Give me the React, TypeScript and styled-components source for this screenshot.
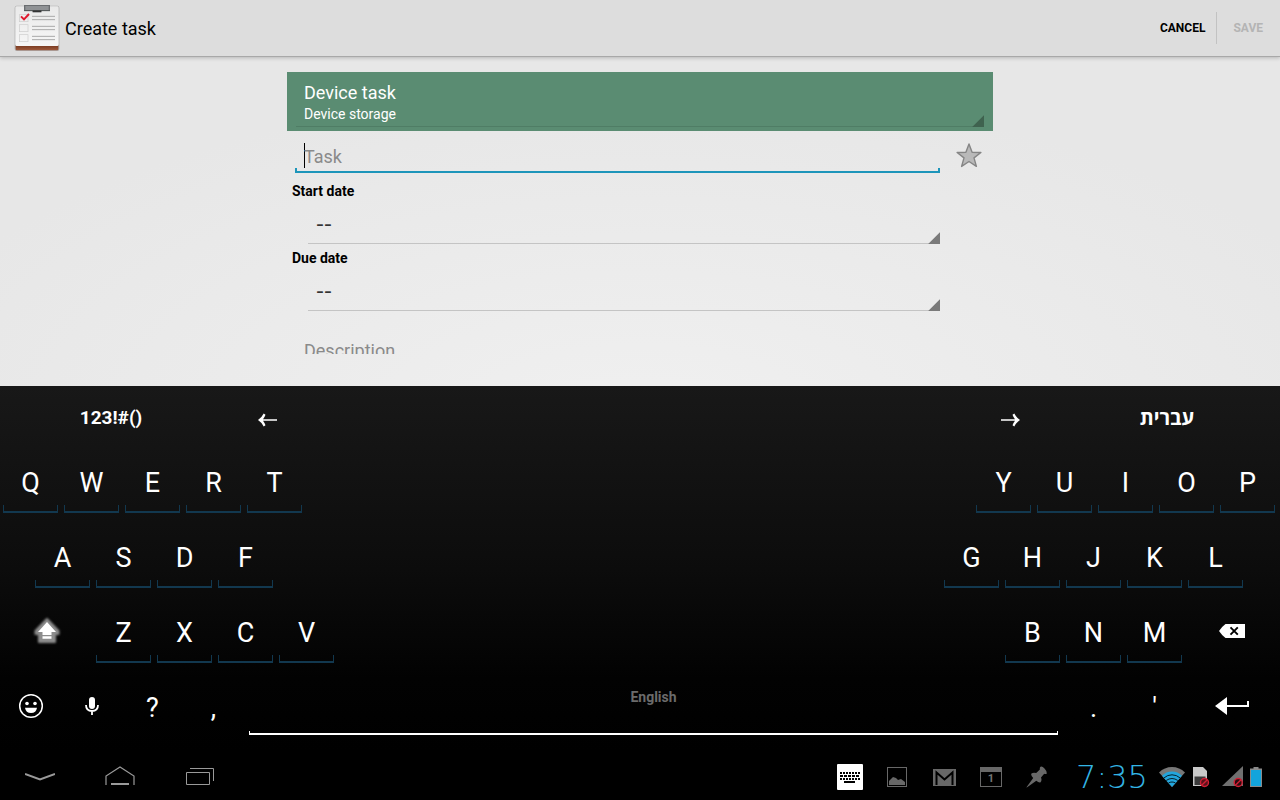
import React from "react";
import styled, { createGlobalStyle } from "styled-components";

const GlobalStyle = createGlobalStyle`
  * { box-sizing: border-box; }
  body { margin: 0; background: #000; font-family: Roboto, "Liberation Sans", sans-serif; }
  button, input, select, textarea {
    font: inherit; color: inherit; margin: 0; padding: 0; border: 0;
    background: transparent; border-radius: 0; outline: none; appearance: none;
  }
  svg { display: block; }
`;

const Screen = styled.div`
  display: flex;
  flex-direction: column;
  height: 100vh;
  overflow: hidden;
`;

/* ---------- action bar ---------- */

const ActionBar = styled.header`
  display: flex;
  align-items: center;
  flex: none;
  height: 57px;
  padding-left: 14px;
  background: #dddddd;
  border-bottom: 1px solid #a8a8a8;
  box-shadow: 0 1px 4px rgba(0, 0, 0, 0.22);
  position: relative;
`;

const Title = styled.h1`
  flex: 1;
  margin: 0 0 0 5px;
  padding-top: 2px;
  font-size: 18px;
  line-height: 24px;
  font-weight: 400;
  color: #000;
`;

const Action = styled.button`
  height: 32px;
  padding: 0 11px;
  font-size: 12px;
  font-weight: 700;
  color: #000;
  &:disabled {
    padding: 0 17px 0 16px;
    color: #b4b4b4;
    border-left: 1px solid #c2c2c2;
  }
`;

/* ---------- form ---------- */

const Content = styled.main`
  flex: 1;
  min-height: 0;
  padding: 15px 16px 32px;
  background: radial-gradient(ellipse 60% 100% at 50% 110%, #f0f0f0, #e7e7e7);
`;

const Form = styled.form`
  width: 100%;
  max-width: 706px;
  height: 100%;
  margin: 0 auto;
  overflow: hidden;
`;

const AccountButton = styled.button`
  display: block;
  width: 100%;
  padding: 0 9px 4px;
  text-align: left;
  color: #fff;
  background: #5a8c72;
`;

const AccountFace = styled.span`
  display: flex;
  flex-direction: column;
  height: 55px;
  padding: 10px 8px 0;
  background:
    linear-gradient(135deg, transparent 48%, #3f624f 54%) right bottom / 12px 12px no-repeat,
    linear-gradient(#4f7d65, #4f7d65) left bottom / 100% 1px no-repeat;
`;

const AccountName = styled.span`
  font-size: 18px;
  line-height: 22px;
`;

const AccountType = styled.span`
  font-size: 14px;
  line-height: 20px;
`;

const TaskRow = styled.div`
  display: flex;
`;

const TaskInput = styled.input`
  flex: 1;
  min-width: 0;
  height: 42px;
  margin-left: 8px;
  padding: 8px 8px 0 9px;
  font-size: 18px;
  background:
    linear-gradient(#000, #000) 9px 12px / 1px 25px no-repeat,
    linear-gradient(#1d95ba, #1d95ba) left bottom / 100% 2px no-repeat,
    linear-gradient(#1d95ba, #1d95ba) left bottom / 2px 5px no-repeat,
    linear-gradient(#1d95ba, #1d95ba) right bottom / 2px 5px no-repeat;
  &::placeholder { color: #8a8a8a; opacity: 1; }
`;

const StarButton = styled.button`
  display: flex;
  justify-content: center;
  width: 53px;
  padding: 12px 0 0 5px;
`;

const DateFields = styled.div`
  display: flex;
  flex-direction: column;
`;

const DateField = styled.div`
  display: flex;
  flex-direction: column;
  margin: 0 53px 6px 5px;
  &:first-of-type { margin-top: 10px; }
`;

const DateLabel = styled.label`
  font-size: 14px;
  line-height: 16px;
  font-weight: 700;
  color: #000;
`;

const DateSelect = styled.select`
  height: 45px;
  margin-left: 16px;
  padding: 3px 8px 0;
  font-family: "DejaVu Sans", sans-serif;
  font-size: 22px;
  color: #333;
  background:
    linear-gradient(135deg, transparent 48%, #7a7a7a 54%) right bottom / 12px 12px no-repeat,
    linear-gradient(#c4c4c4, #c4c4c4) left bottom / 100% 1px no-repeat;
`;

const Description = styled.textarea`
  display: block;
  width: 100%;
  height: 60px;
  padding: 22px 17px 0;
  font-size: 18px;
  line-height: 24px;
  resize: none;
  &::placeholder { color: #8a8a8a; opacity: 1; }
`;

/* ---------- keyboard ---------- */

const Keyboard = styled.section`
  flex: none;
  padding-bottom: 6px;
  color: #fff;
  background: linear-gradient(#181818, #0c0c0c 50%, #020202 80%, #000);
`;

const KeyRow = styled.div<{ $inset?: number }>`
  display: flex;
  justify-content: space-between;
  height: 75px;
  padding-left: ${(p) => p.$inset ?? 0}px;
  padding-right: ${(p) => (p.$inset ?? 0) + 2}px;
`;

const ModeRow = styled(KeyRow)`
  height: 60px;
`;

const KeyGroup = styled.div`
  display: flex;
`;

const LetterKey = styled.button`
  width: 61px;
  padding: 0 3px 8px;
  font-size: 27px;
`;

const LetterFace = styled.span`
  display: block;
  height: 67px;
  padding-top: 7px;
  line-height: 60px;
  background:
    linear-gradient(#12384f, #12384f) left bottom / 100% 2px no-repeat,
    linear-gradient(#12384f, #12384f) left bottom / 1px 8px no-repeat,
    linear-gradient(#12384f, #12384f) right bottom / 1px 8px no-repeat;
`;

const SymbolKey = styled.button`
  width: 61px;
  padding-bottom: 2px;
  font-size: 27px;
`;

const IconKey = styled.button<{ $wide?: boolean }>`
  display: flex;
  align-items: center;
  justify-content: center;
  width: ${(p) => (p.$wide ? 93 : 61)}px;
  padding-bottom: 5px;
`;

const ArrowKey = styled(IconKey)`
  width: 91px;
  padding: 8px 0 0;
`;

const ModeKey = styled.button`
  width: 222px;
  padding-top: 2px;
  font-family: Roboto, "Open Sans", "DejaVu Sans", sans-serif;
  font-size: 19px;
  font-weight: 700;
  &:lang(he) { font-size: 20px; }
`;

const SpaceKey = styled.button`
  flex: 1;
  margin: 0 5px 11px;
  padding-bottom: 12px;
  font-size: 14px;
  font-weight: 700;
  color: #6b6b6b;
  background:
    linear-gradient(#fff, #fff) left bottom / 100% 2px no-repeat,
    linear-gradient(#fff, #fff) left bottom / 1px 4px no-repeat,
    linear-gradient(#fff, #fff) right bottom / 1px 4px no-repeat;
`;

/* ---------- system bar ---------- */

const SystemBar = styled.footer`
  display: flex;
  align-items: center;
  justify-content: space-between;
  flex: none;
  height: 48px;
  padding-right: 18px;
  background: #000;
`;

const NavGroup = styled.nav`
  display: flex;
`;

const NavButton = styled.button`
  display: flex;
  align-items: center;
  justify-content: center;
  width: 80px;
  height: 48px;
`;

const Tray = styled.div`
  display: flex;
  align-items: center;
  gap: 24px;
  padding-top: 2px;
`;

const StatusGroup = styled.div`
  display: flex;
  align-items: center;
  gap: 7px;
`;

const Clock = styled.time`
  width: 80px;
  font-family: "DejaVu Sans Light", "DejaVu Sans ExtraLight", "DejaVu Sans", sans-serif;
  font-weight: 200;
  font-size: 32px;
  line-height: 40px;
  text-align: center;
  color: #33b5e5;
`;

/* ---------- drawings ---------- */

const AppIcon = () => (
  <svg width="46" height="48" viewBox="0 0 138 144" aria-hidden="true">
    <defs>
      <linearGradient id="paper" x1="0" y1="0" x2="0" y2="1">
        <stop offset="0" stopColor="#e9e9e9" />
        <stop offset="1" stopColor="#f6f6f6" />
      </linearGradient>
      <linearGradient id="wood" x1="0" y1="0" x2="0" y2="1">
        <stop offset="0" stopColor="#6b2f17" />
        <stop offset="1" stopColor="#a05a3c" />
      </linearGradient>
    </defs>
    <rect x="2" y="5" width="134" height="136" rx="6" fill="#8e8e8e" opacity="0.6" />
    <rect x="5" y="120" width="128" height="19" rx="3" fill="url(#wood)" />
    <rect x="4" y="7" width="130" height="119" rx="4" fill="url(#paper)" />
    <path d="M30 3h78v18H82v4H56v-4H30z" fill="#6a6d70" />
    <path d="M34 9h70M34 15h70" stroke="#b5b8ba" strokeWidth="3" />
    <path d="M30 20h78" stroke="#55585a" strokeWidth="3" />
    <path d="M56 22h26" stroke="#333" strokeWidth="5" />
    <g fill="none" stroke="#cdcdcd" strokeWidth="2">
      <rect x="16" y="32" width="26" height="21" />
      <rect x="16" y="62" width="26" height="21" />
      <rect x="16" y="92" width="26" height="21" />
    </g>
    <path
      d="M54 37h69M54 47h69M54 67h69M54 77h69M54 97h69M54 107h69"
      stroke="#a9a9a9"
      strokeWidth="3"
    />
    <path d="M21 37l9 9 15-16" fill="none" stroke="#e0182d" strokeWidth="6" />
  </svg>
);

const Star = () => (
  <svg width="26" height="25" viewBox="0 0 26 25" aria-hidden="true">
    <path
      d="M13 1l3.1 8.2 8.8.3-6.9 5.4 2.4 8.5-7.4-4.9-7.4 4.9L8 14.900 1.100 9.500l8.800-.3z"
      fill="#b9b9b9"
      stroke="#858585"
      strokeWidth="1.400"
      strokeLinejoin="round"
    />
  </svg>
);

const Arrow = ({ right }: { right?: boolean }) => (
  <svg width="19" height="14" viewBox="0 0 19 14" aria-hidden="true">
    <path
      d={
        right
          ? "M0 6.200h14Q12.300 4 11.500 1.700l1.800-1.200Q15.500 4.800 19 7q-3.500 2.200-5.700 6.500l-1.800-1.200q.8-2.300 2.500-4.500H0z"
          : "M19 6.200H5Q6.700 4 7.500 1.700L5.700.5Q3.500 4.800 0 7q3.500 2.200 5.700 6.500l1.800-1.200q-.8-2.300-2.500-4.500H19z"
      }
      fill="#fff"
    />
  </svg>
);

const Shift = () => (
  <svg width="34" height="34" viewBox="0 0 34 34" aria-hidden="true">
    <defs>
      <filter id="glow" x="-30%" y="-30%" width="160%" height="160%">
        <feGaussianBlur stdDeviation="1" />
      </filter>
    </defs>
    <path
      d="M17 5L5.500 17v3H9v8h16v-8h3.500v-3z"
      fill="#8c8c8c"
      stroke="#8c8c8c"
      strokeWidth="2"
      strokeLinejoin="round"
      filter="url(#glow)"
    />
    <path d="M17 8l9 10h-4.500v3h-9v-3H8z" fill="#fff" />
    <path d="M12.500 23.500h9" stroke="#fff" strokeWidth="2.500" />
  </svg>
);

const Backspace = () => (
  <svg width="26" height="14" viewBox="0 0 26 14" aria-hidden="true">
    <path d="M6.500 0H26v14H6.500Q3 11.500 0 7q3-4.500 6.500-7z" fill="#fff" />
    <path d="M11.500 3.300l7.300 7.400M18.800 3.300l-7.300 7.400" stroke="#000" strokeWidth="1.900" />
  </svg>
);

const Smiley = () => (
  <svg width="26" height="26" viewBox="0 0 26 26" aria-hidden="true">
    <circle cx="13" cy="13" r="11.300" fill="none" stroke="#fff" strokeWidth="1.500" />
    <circle cx="9" cy="10.500" r="1.800" fill="#fff" />
    <circle cx="17" cy="10.500" r="1.800" fill="#fff" />
    <path d="M7 14.800h12q-.8 5.200-6 5.200t-6-5.200z" fill="#fff" />
  </svg>
);

const Mic = () => (
  <svg width="16" height="20" viewBox="0 0 16 20" aria-hidden="true">
    <rect x="5" y="1" width="6" height="12" rx="3" fill="#fff" />
    <path d="M2 9q0 6 6 6t6-6M8 15v4" fill="none" stroke="#fff" strokeWidth="1.800" />
  </svg>
);

const Enter = () => (
  <svg width="34" height="18" viewBox="0 0 34 18" aria-hidden="true">
    <path d="M0 9L12 0v18z" fill="#fff" />
    <path d="M12 9h21V4" fill="none" stroke="#fff" strokeWidth="2" />
  </svg>
);

const HideIcon = () => (
  <svg width="30" height="10" viewBox="0 0 30 10" aria-hidden="true">
    <path d="M0 3l15 5.500L30 3" fill="none" stroke="#9a9a9a" strokeWidth="2" />
  </svg>
);

const HomeIcon = () => (
  <svg width="30" height="20" viewBox="0 0 30 20" aria-hidden="true">
    <path d="M1 19v-9L15 1l14 9v9" fill="none" stroke="#9a9a9a" strokeWidth="1.200" />
    <path d="M6 18h18" stroke="#9a9a9a" strokeWidth="2" />
  </svg>
);

const RecentIcon = () => (
  <svg width="28" height="18" viewBox="0 0 28 18" aria-hidden="true">
    <path d="M.5 5.500h23v12H.5zM4 1.500h23.500V14" fill="none" stroke="#9a9a9a" />
  </svg>
);

const KeyboardIcon = () => (
  <svg width="26" height="26" viewBox="0 0 26 26" role="img" aria-label="Keyboard">
    <rect width="26" height="26" rx="1" fill="#fff" />
    <path d="M3 9h20M3 15h20" stroke="#000" strokeWidth="2" strokeDasharray="2 1" />
    <path d="M3 12h20" stroke="#000" strokeWidth="2" strokeDasharray="3 1" />
    <path d="M7 18h11" stroke="#000" strokeWidth="2" />
  </svg>
);

const PictureIcon = () => (
  <svg width="22" height="20" viewBox="0 0 22 20" role="img" aria-label="Picture">
    <rect x=".5" y=".5" width="19" height="19" fill="none" stroke="#686868" />
    <path d="M2 18v-4l4-4 3 1 2 2 3-1 4 3v3z" fill="#686868" />
  </svg>
);

const MailIcon = () => (
  <svg width="23" height="17" viewBox="0 0 23 17" role="img" aria-label="Mail">
    <rect width="23" height="17" fill="#686868" />
    <path d="M3.500 16V3.500l8 7 8-7V16" fill="none" stroke="#000" strokeWidth="2" />
  </svg>
);

const CalendarMark = styled.span`
  display: flex;
  align-items: center;
  justify-content: center;
  width: 22px;
  height: 20px;
  border: 1px solid #686868;
  border-top-width: 5px;
  font-size: 11px;
  line-height: 14px;
  font-weight: 700;
  color: #747474;
`;

const PinIcon = () => (
  <svg width="22" height="22" viewBox="0 0 22 22" role="img" aria-label="Pinned">
    <path
      d="M14.500.8q1.500-1 4 1.700t2.300 5q-1 .9-2.600.3L15 11.500q1.300 3-.7 5-1.800.3-4-1.700L.8 21.600.5 21.300 7.200 12Q4.800 9.500 5.200 7.700q2-1.700 5-.7l3.700-3.400q-.4-1.800.6-2.800z"
      fill="#686868"
    />
  </svg>
);

const WifiIcon = () => (
  <svg width="26" height="20" viewBox="0 0 26 20" role="img" aria-label="Wi-Fi">
    <path d="M13 20L0 5.500Q5.500 0 13 0t13 5.500z" fill="#777" />
    <path d="M13 20L3 8.800Q7 4.500 13 4.500t10 4.300z" fill="#22a5dc" />
    <path
      d="M4.800 11Q8.500 7.800 13 7.800t8.200 3.200M7.200 13.500Q10 11.500 13 11.500t5.800 2M9.500 16Q11 15 13 15t3.500 1"
      fill="none"
      stroke="#04202c"
      strokeWidth="1"
    />
  </svg>
);

const NoSim = () => (
  <svg width="22" height="22" viewBox="0 0 22 22" role="img" aria-label="No SIM card">
    <path d="M1 1h10l4 4v15H1z" fill="#c9c9c9" />
    <path d="M2.500 10.500h11V19h-11z" fill="#3b3b3b" />
    <circle cx="12.500" cy="16.500" r="4" fill="#5a1119" stroke="#d01f35" strokeWidth="1.400" />
    <path d="M9.700 19.300l5.600-5.600" stroke="#d01f35" strokeWidth="1.400" />
  </svg>
);

const NoSignal = () => (
  <svg width="22" height="22" viewBox="0 0 22 22" role="img" aria-label="No signal">
    <path d="M22 0v20H1z" fill="#707070" />
    <circle cx="17.200" cy="16.500" r="4" fill="#2a0a0e" stroke="#d01f35" strokeWidth="1.400" />
    <path d="M14.400 19.300l5.600-5.600" stroke="#d01f35" strokeWidth="1.400" />
  </svg>
);

const Battery = () => (
  <svg width="12" height="20" viewBox="0 0 12 20" role="img" aria-label="Battery">
    <path d="M3.500 0h5v1.500H12V20H0V1.500h3.500z" fill="#8a8a8a" />
    <path d="M1 3h10v16H1z" fill="#12a4dc" />
  </svg>
);

/* ---------- screen ---------- */

const Letters = ({ keys }: { keys: string }) => (
  <>
    {keys.split("").map((k) => (
      <LetterKey key={k} type="button">
        <LetterFace>{k}</LetterFace>
      </LetterKey>
    ))}
  </>
);

export default function App() {
  return (
    <>
      <GlobalStyle />
      <Screen>
        <ActionBar>
          <AppIcon />
          <Title>Create task</Title>
          <Action type="button">CANCEL</Action>
          <Action type="submit" form="task-form" disabled>
            SAVE
          </Action>
        </ActionBar>

        <Content>
          <Form id="task-form">
            <AccountButton type="button" aria-haspopup="listbox">
              <AccountFace>
                <AccountName>Device task</AccountName>
                <AccountType>Device storage</AccountType>
              </AccountFace>
            </AccountButton>
            <TaskRow>
              <TaskInput type="text" placeholder="Task" aria-label="Task" />
              <StarButton type="button" aria-label="Star task">
                <Star />
              </StarButton>
            </TaskRow>
            <DateFields>
              <DateField>
                <DateLabel htmlFor="start-date">Start date</DateLabel>
                <DateSelect id="start-date">
                  <option>--</option>
                </DateSelect>
              </DateField>
              <DateField>
                <DateLabel htmlFor="due-date">Due date</DateLabel>
                <DateSelect id="due-date">
                  <option>--</option>
                </DateSelect>
              </DateField>
            </DateFields>
            <Description placeholder="Description" aria-label="Description" />
          </Form>
        </Content>

        <Keyboard aria-label="Keyboard">
          <ModeRow>
            <KeyGroup>
              <ModeKey type="button">123!#()</ModeKey>
              <ArrowKey type="button" aria-label="Left">
                <Arrow />
              </ArrowKey>
            </KeyGroup>
            <KeyGroup>
              <ArrowKey type="button" aria-label="Right">
                <Arrow right />
              </ArrowKey>
              <ModeKey type="button" lang="he">
                עברית
              </ModeKey>
            </KeyGroup>
          </ModeRow>
          <KeyRow>
            <KeyGroup>
              <Letters keys="QWERT" />
            </KeyGroup>
            <KeyGroup>
              <Letters keys="YUIOP" />
            </KeyGroup>
          </KeyRow>
          <KeyRow $inset={32}>
            <KeyGroup>
              <Letters keys="ASDF" />
            </KeyGroup>
            <KeyGroup>
              <Letters keys="GHJKL" />
            </KeyGroup>
          </KeyRow>
          <KeyRow>
            <KeyGroup>
              <IconKey type="button" $wide aria-label="Shift">
                <Shift />
              </IconKey>
              <Letters keys="ZXCV" />
            </KeyGroup>
            <KeyGroup>
              <Letters keys="BNM" />
              <IconKey type="button" $wide aria-label="Backspace">
                <Backspace />
              </IconKey>
            </KeyGroup>
          </KeyRow>
          <KeyRow>
            <KeyGroup>
              <IconKey type="button" aria-label="Emoji">
                <Smiley />
              </IconKey>
              <IconKey type="button" aria-label="Voice input">
                <Mic />
              </IconKey>
              <SymbolKey type="button">?</SymbolKey>
              <SymbolKey type="button">,</SymbolKey>
            </KeyGroup>
            <SpaceKey type="button">English</SpaceKey>
            <KeyGroup>
              <SymbolKey type="button">.</SymbolKey>
              <SymbolKey type="button">'</SymbolKey>
              <IconKey type="button" $wide aria-label="Enter">
                <Enter />
              </IconKey>
            </KeyGroup>
          </KeyRow>
        </Keyboard>

        <SystemBar>
          <NavGroup>
            <NavButton type="button" aria-label="Hide keyboard">
              <HideIcon />
            </NavButton>
            <NavButton type="button" aria-label="Home">
              <HomeIcon />
            </NavButton>
            <NavButton type="button" aria-label="Recent apps">
              <RecentIcon />
            </NavButton>
          </NavGroup>
          <Tray>
            <KeyboardIcon />
            <PictureIcon />
            <MailIcon />
            <CalendarMark>1</CalendarMark>
            <PinIcon />
            <StatusGroup>
              <Clock>7:35</Clock>
              <WifiIcon />
              <NoSim />
              <NoSignal />
              <Battery />
            </StatusGroup>
          </Tray>
        </SystemBar>
      </Screen>
    </>
  );
}
